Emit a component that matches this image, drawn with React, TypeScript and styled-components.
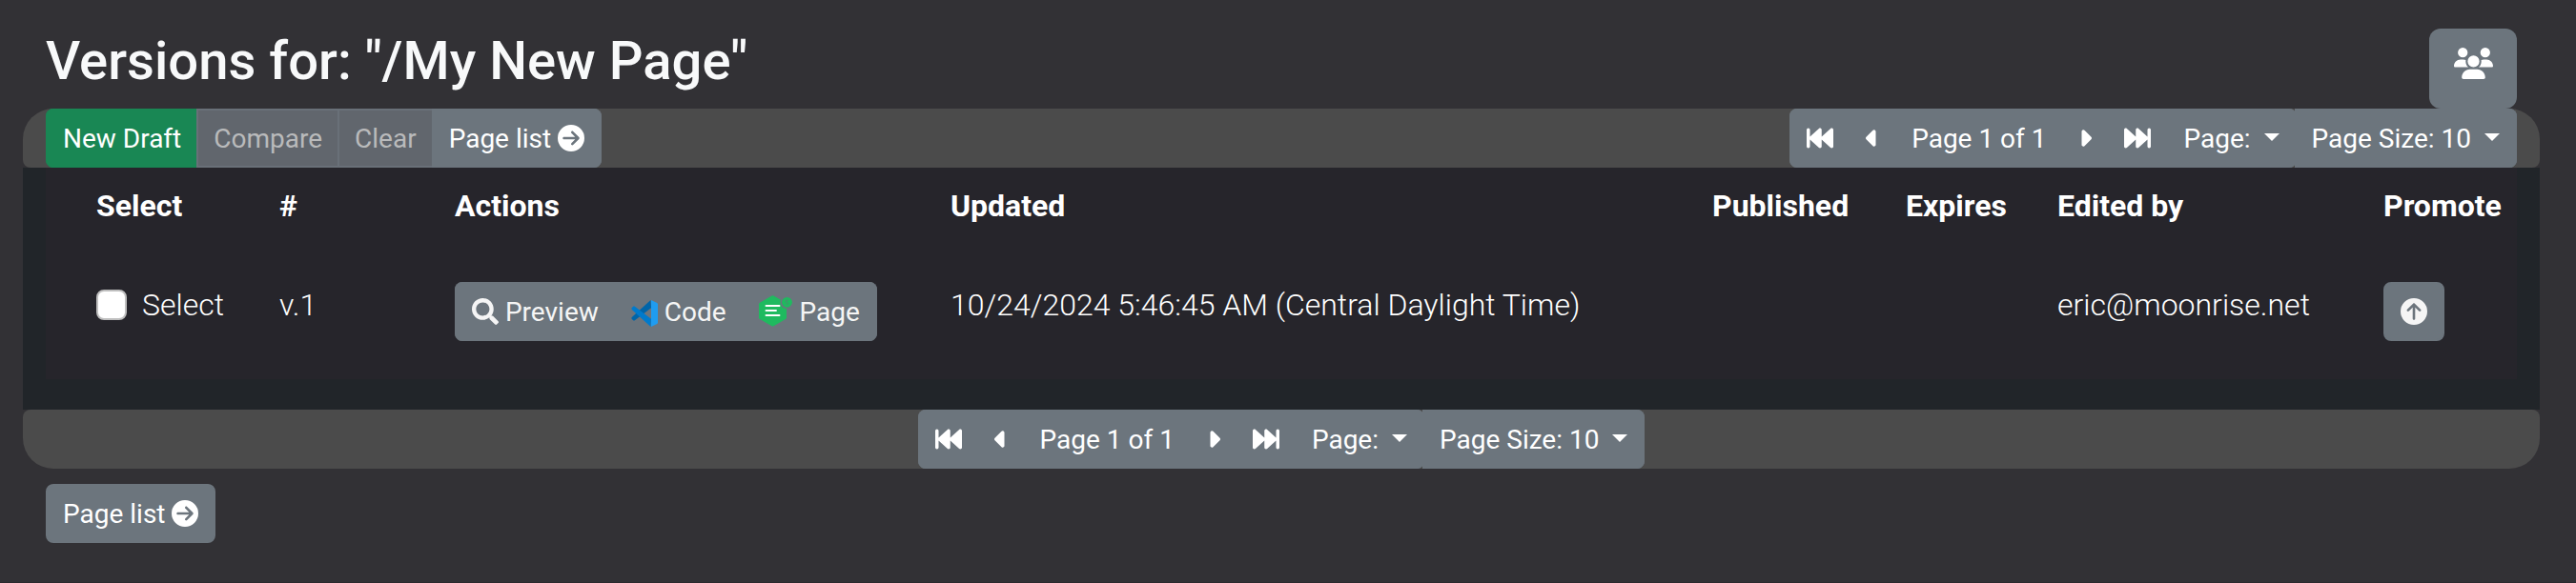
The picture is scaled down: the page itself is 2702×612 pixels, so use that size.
import React from 'react';
import styled, { createGlobalStyle } from 'styled-components';
import { FaSearch } from 'react-icons/fa';
import {
  FaCaretLeft,
  FaCaretRight,
  FaCircleArrowRight,
  FaCircleArrowUp,
  FaUsers,
} from 'react-icons/fa6';

const GlobalStyle = createGlobalStyle`
  * {
    box-sizing: border-box;
  }
  body {
    margin: 0;
    background: #323135;
    color: #fff;
    font-family: Roboto, 'Liberation Sans', sans-serif;
    font-size: 32px;
    font-weight: 300;
    line-height: 1.5;
  }
`;

const Page = styled.div`
  min-height: 612px;
  padding: 0 38px 0 24px;
  border-bottom: 1px solid #2b2a2e;
`;
const Header = styled.header`
  display: flex;
  justify-content: space-between;
  align-items: flex-start;
  height: 114px;
  padding: 30px 24px 0;
`;
const Title = styled.h1`
  margin: 1px 0 0;
  color: #f8f9fa;
  font-size: 56.2px;
  font-weight: 500;
  line-height: 67px;
`;
const TeamButton = styled.button`
  display: flex;
  justify-content: center;
  width: 92px;
  height: 84px;
  padding: 20px 0 0;
  border: 0;
  border-radius: 12px;
  background: #6c757d;
  color: #fff;
  svg {
    width: 41px;
    height: 33px;
  }
`;
const Bar = styled.div<{ $bottom?: boolean }>`
  display: flex;
  justify-content: ${p => (p.$bottom ? 'center' : 'space-between')};
  height: 62px;
  padding: 0 24px;
  border-radius: ${p => (p.$bottom ? '8px 8px 32px 32px' : '32px 32px 8px 8px')};
  background: #4b4b4b;
`;
const Group = styled.div`
  display: flex;
`;
const ButtonGroup = styled.div<{ $attached?: boolean }>`
  display: inline-flex;
  margin-left: ${p => (p.$attached ? '-2px' : '0')};
  border-radius: ${p => (p.$attached ? '0 8px 8px 0' : '8px')};
  overflow: hidden;
`;

const backgrounds = { normal: '#6c757d', soft: '#6c757d', success: '#198754', muted: '#61666d' };
const borders = { normal: '#6c757d', soft: '#6c757d', success: '#198754', muted: '#697078' };
const colors = { normal: '#fff', soft: '#f5f5f5', success: '#fff', muted: '#b9babb' };

const Button = styled.button<{ $variant?: keyof typeof colors; $round?: boolean }>`
  display: inline-flex;
  align-items: center;
  height: 62px;
  padding: 2px 16px 0;
  border: 2px solid ${p => borders[p.$variant || 'normal']};
  border-radius: ${p => (p.$round ? '8px' : '0')};
  background: ${p => backgrounds[p.$variant || 'normal']};
  color: ${p => colors[p.$variant || 'normal']};
  font: 400 28px/42px Roboto, 'Liberation Sans', sans-serif;
  white-space: pre;
  & + & {
    margin-left: -2px;
  }
  svg {
    margin-bottom: 3px;
  }
  svg.half {
    width: 14px;
  }
  svg.low {
    margin-bottom: 0;
    margin-top: 2px;
  }
`;
const Caret = styled.span`
  margin: 0 0 4px 14px;
  border-top: 8px solid;
  border-right: 8px solid transparent;
  border-left: 8px solid transparent;
`;
const TableArea = styled.div`
  padding: 0 24px 32px;
  background: #212529;
`;
const Table = styled.div`
  height: 222px;
  background: #26252b;
`;
const Row = styled.div<{ $head?: boolean }>`
  display: grid;
  grid-template-columns: 192px 184px 520px 799px 203px 159px 342px 1fr;
  height: ${p => (p.$head ? '80px' : '142px')};
  padding: ${p => (p.$head ? '16px' : '40px')} 0 0 53px;
  font-weight: ${p => (p.$head ? 700 : 300)};
  white-space: nowrap;
`;
const SelectLabel = styled.label`
  display: flex;
  height: 48px;
  align-items: center;
  gap: 16px;
`;
const Checkbox = styled.input`
  appearance: none;
  width: 32px;
  height: 32px;
  margin: 0;
  border: 2px solid #bfbfbf;
  border-radius: 8px;
  background: #fff;
`;
const Footer = styled.div`
  padding: 16px 24px;
  line-height: 0;
`;

const fastPath =
  'M0 96a32 32 0 0 1 64 0v132L235 72c21-17 53-3 53 24v132L459 72c21-17 53-3 53 24v320c0 27-32 42-53 24L288 284v132c0 27-32 42-53 24L64 284v132a32 32 0 0 1-64 0z';

const FirstIcon = () => (
  <svg width="28" height="28" viewBox="0 0 512 512" fill="currentColor">
    <path d={fastPath} />
  </svg>
);

const LastIcon = () => (
  <svg width="28" height="28" viewBox="0 0 512 512" fill="currentColor">
    <path d={fastPath} transform="translate(512) scale(-1 1)" />
  </svg>
);

const CodeIcon = () => (
  <svg className="low" width="28" height="28" viewBox="0 0 28 28">
    <path d="M20.500 0L0.500 18.300v1.400l1.900 1.700 1.200.1L21 8.300z" fill="#0065a9" />
    <path d="M20.500 28L0.500 9.700V8.300l1.900-1.700 1.200-.1L21 19.700z" fill="#007acc" />
    <path d="M21 0l6.200 2.900.8 1.200v19.800l-.8 1.200L21 28z" fill="#1f9cf0" />
  </svg>
);

const PageIcon = () => (
  <svg width="36" height="33" viewBox="0 0 36 33">
    <path
      d="M13.500.5Q14.500 0 15.500.5L23 4.700A6.700 6.700 0 0 0 29 14v9.500q0 1-1 1.600L15.500 32.300q-1 .5-2 0L1 25.100q-1-.6-1-1.600V9.300q0-1 1-1.600z"
      fill="#1fba5f"
    />
    <circle cx="29.500" cy="7.300" r="5.400" fill="#1fba5f" />
    <path d="M7.500 11h14M7.500 16h10.500M7.500 21h14" stroke="#fff" strokeWidth="1.900" strokeLinecap="round" />
    <path d="M31 5.200h-2.700v2c3-.3 3.200 2.600 0 2.300" stroke="#4c8d70" fill="none" />
  </svg>
);

const Pager = () => (
  <Group>
    <ButtonGroup>
      <Button><FirstIcon /></Button>
      <Button><FaCaretLeft className="half" /></Button>
      <Button>Page 1 of 1</Button>
      <Button><FaCaretRight className="half" /></Button>
      <Button><LastIcon /></Button>
      <Button>Page:<Caret /></Button>
    </ButtonGroup>
    <ButtonGroup $attached>
      <Button>Page Size: 10<Caret /></Button>
    </ButtonGroup>
  </Group>
);

const columns = ['Select', '#', 'Actions', 'Updated', 'Published', 'Expires', 'Edited by', 'Promote'];

const App: React.FC = () => {
  return (
    <>
      <GlobalStyle />
      <Page>
        <Header>
          <Title>Versions for: "/My New Page"</Title>
          <TeamButton><FaUsers /></TeamButton>
        </Header>
        <Bar>
          <ButtonGroup>
            <Button $variant="success">New Draft</Button>
            <Button $variant="muted">Compare</Button>
            <Button $variant="muted">Clear</Button>
            <Button>Page list <FaCircleArrowRight /></Button>
          </ButtonGroup>
          <Pager />
        </Bar>
        <TableArea>
          <Table>
            <Row $head>
              {columns.map(c => <span key={c}>{c}</span>)}
            </Row>
            <Row>
              <SelectLabel><Checkbox type="checkbox" />Select</SelectLabel>
              <span>v.1</span>
              <span>
                <ButtonGroup>
                  <Button $variant="soft"><FaSearch /> Preview</Button>
                  <Button $variant="soft"><CodeIcon /> Code</Button>
                  <Button $variant="soft"><PageIcon /> Page</Button>
                </ButtonGroup>
              </span>
              <span>10/24/2024 5:46:45 AM (Central Daylight Time)</span>
              <span />
              <span />
              <span>eric@moonrise.net</span>
              <span><Button $variant="soft" $round><FaCircleArrowUp /></Button></span>
            </Row>
          </Table>
        </TableArea>
        <Bar $bottom><Pager /></Bar>
        <Footer>
          <Button $round>Page list <FaCircleArrowRight /></Button>
        </Footer>
      </Page>
    </>
  );
};

export default App;
